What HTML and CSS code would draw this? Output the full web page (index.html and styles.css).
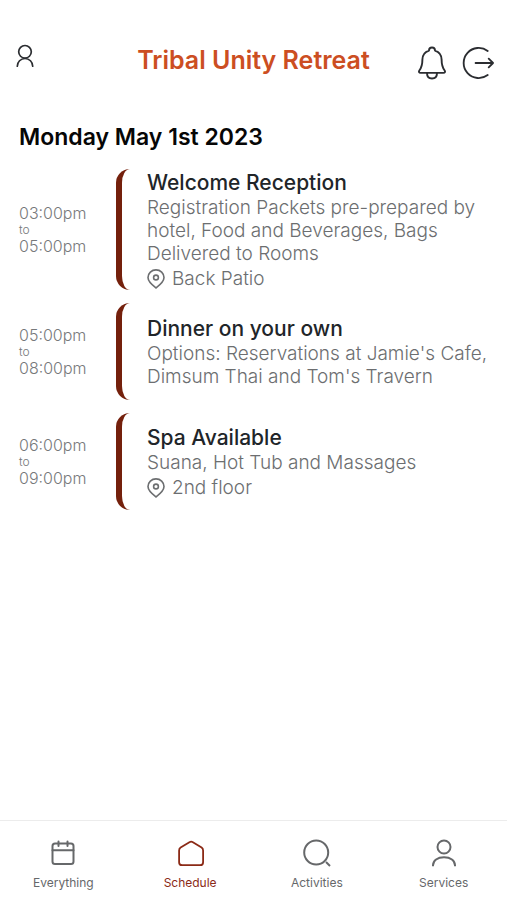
FILE: index.html
```html
<!DOCTYPE html>
<html lang="en">
<head>
<meta charset="utf-8">
<meta name="viewport" content="width=device-width, initial-scale=1">
<title>Tribal Unity Retreat</title>
<link rel="stylesheet" href="styles.css">
</head>
<body>
<header class="topbar">
  <div class="topbar-side topbar-profile">
    <button class="icon-button" type="button" aria-label="Profile">
      <svg class="icon-profile" viewBox="0 0 18 24" fill="none" stroke="currentColor" stroke-width="1.7" stroke-linecap="round"><circle cx="9" cy="7.8" r="6.3"/><path d="M1.3 22.2C1.3 18 4.7 14.5 9 14.5s7.7 3.5 7.7 7.7"/></svg>
    </button>
  </div>
  <h1 class="topbar-title">Tribal Unity Retreat</h1>
  <div class="topbar-side topbar-actions">
    <button class="icon-button" type="button" aria-label="Notifications">
      <svg class="icon-bell" viewBox="0 0 28 34" fill="none" stroke="currentColor" stroke-width="1.9" stroke-linecap="round" stroke-linejoin="round"><path d="M11 4.6C11 2.8 12.3 1.5 14 1.5s3 1.3 3 3.1c4.300 1.400 6.600 4.700 6.600 9 0 5.900 1 8.200 2.900 10.700 1 1.400.5 2.600-1.100 2.600H2.600c-1.600 0-2.100-1.200-1.100-2.600 1.900-2.500 2.900-4.800 2.900-10.700 0-4.300 2.300-7.600 6.600-9z"/><path d="M9 27c0 3.300 2 5.500 5 5.500s5-2.200 5-5.500"/></svg>
    </button>
    <button class="icon-button" type="button" aria-label="Log out">
      <svg class="icon-logout" viewBox="0 0 34 34" fill="none" stroke="currentColor" stroke-width="1.9" stroke-linecap="round" stroke-linejoin="round"><path d="M26.500 4.600a15.500 15.500 0 1 0 0 24.800"/><path d="M14 17h18M27.500 12.500 32 17l-4.500 4.500"/></svg>
    </button>
  </div>
</header>

<main class="schedule">
  <h2 class="day">Monday May 1st 2023</h2>
  <ul class="events">
    <li class="event">
      <div class="time"><time>03:00pm</time><span class="to">to</span><time>05:00pm</time></div>
      <div class="details">
        <h3 class="name">Welcome Reception</h3>
        <p class="description">Registration Packets pre-prepared by hotel, Food and Beverages, Bags Delivered to Rooms</p>
        <p class="place"><svg class="icon-pin" viewBox="0 0 18 20" fill="none" stroke="currentColor" stroke-width="1.6" stroke-linejoin="round"><path d="M9 19C5.500 16.300 1 13 1 8.600a8 7.700 0 0 1 16 0C17 13 12.500 16.300 9 19z"/><circle cx="9" cy="8.500" r="2.400"/></svg>Back Patio</p>
      </div>
    </li>
    <li class="event">
      <div class="time"><time>05:00pm</time><span class="to">to</span><time>08:00pm</time></div>
      <div class="details">
        <h3 class="name">Dinner on your own</h3>
        <p class="description">Options: Reservations at Jamie's Cafe, Dimsum Thai and Tom's Travern</p>
      </div>
    </li>
    <li class="event">
      <div class="time"><time>06:00pm</time><span class="to">to</span><time>09:00pm</time></div>
      <div class="details">
        <h3 class="name">Spa Available</h3>
        <p class="description">Suana, Hot Tub and Massages</p>
        <p class="place"><svg class="icon-pin" viewBox="0 0 18 20" fill="none" stroke="currentColor" stroke-width="1.6" stroke-linejoin="round"><path d="M9 19C5.500 16.300 1 13 1 8.600a8 7.700 0 0 1 16 0C17 13 12.500 16.300 9 19z"/><circle cx="9" cy="8.500" r="2.400"/></svg>2nd floor</p>
      </div>
    </li>
  </ul>
</main>

<nav class="tabs" aria-label="Main">
  <a class="tab" href="#everything">
    <svg class="tab-icon" viewBox="0 0 30 30" fill="none" stroke="currentColor" stroke-width="2" stroke-linecap="round"><rect x="4.500" y="5.500" width="21" height="20.500" rx="2.500"/><path d="M4.500 12.300h21M10.500 3.500v4.500M19.500 3.500v4.500"/></svg>
    Everything
  </a>
  <a class="tab tab-active" href="#schedule" aria-current="page">
    <svg class="tab-icon" viewBox="0 0 30 30" fill="none" stroke="currentColor" stroke-linejoin="round"><path stroke-width="1.800" d="M14.400 4.200 5.600 9.600C4.500 10.300 4.100 11.200 4.100 12.500v11.700c0 1.900 1.100 3 3 3h18c1.900 0 3-1.100 3-3V12.500c0-1.300-.5-2.200-1.500-2.900l-8.700-5.400c-1.200-.7-2.300-.7-3.500 0z"/></svg>
    Schedule
  </a>
  <a class="tab" href="#activities">
    <svg class="tab-icon" viewBox="0 0 30 30" fill="none" stroke="currentColor" stroke-width="2"><circle cx="14.200" cy="14.500" r="12"/><path d="m24 24 4 4"/></svg>
    Activities
  </a>
  <a class="tab" href="#services">
    <svg class="tab-icon" viewBox="0 0 30 30" fill="none" stroke="currentColor" stroke-width="2"><circle cx="15" cy="9" r="6.500"/><path d="M4 28.300v-1C4 22.500 8.500 19.300 15 19.300s11 3.200 11 8v1"/></svg>
    Services
  </a>
</nav>
</body>
</html>
```
FILE: styles.css
```css
* {
  box-sizing: border-box;
}

body {
  margin: 0;
  min-height: 100vh;
  display: flex;
  flex-direction: column;
  background: #fff;
  color: #212529;
  font-family: Inter, "Liberation Sans", sans-serif;
}

h1,
h2,
h3,
p,
ul {
  margin: 0;
  padding: 0;
}

svg {
  display: block;
  flex: none;
}

.topbar {
  display: grid;
  grid-template-columns: 1fr auto 1fr;
  padding: 44px 12px 0;
}

.topbar-side {
  display: flex;
  align-items: flex-start;
}

.topbar-profile {
  padding-left: 4px;
}

.topbar-actions {
  justify-content: flex-end;
  gap: 16px;
  padding-top: 2px;
}

.icon-button {
  padding: 0;
  border: 0;
  background: none;
  color: #2b2d31;
  cursor: pointer;
}

.icon-profile {
  width: 18px;
  height: 24px;
}

.icon-bell {
  width: 28px;
  height: 34px;
}

.icon-logout {
  width: 33px;
  height: 34px;
}

.topbar-title {
  color: #cc4e22;
  font-size: 25px;
  font-weight: 600;
  line-height: 32px;
}

.schedule {
  flex: 1;
  padding: 40px 19px 24px;
}

.day {
  color: #060606;
  font-size: 23px;
  font-weight: 600;
  line-height: 34px;
}

.events {
  display: grid;
  gap: 13px;
  margin-top: 15px;
  list-style: none;
}

.event {
  display: grid;
  grid-template-columns: 97px 1fr;
  min-height: 97px;
}

.time {
  display: flex;
  flex-direction: column;
  justify-content: center;
  color: #77797b;
  font-size: 16px;
  font-weight: 300;
  line-height: 18px;
}

.to {
  font-size: 12px;
  line-height: 15px;
}

.details {
  display: flex;
  flex-direction: column;
  justify-content: center;
  padding-left: 25px;
  border-left: 6px solid #74200c;
  border-radius: 14px;
}

.name {
  font-size: 21px;
  font-weight: 500;
  line-height: 27px;
}

.description,
.place {
  color: #6c6e70;
  font-size: 19px;
  font-weight: 300;
  line-height: 23px;
}

.place {
  display: flex;
  align-items: center;
  gap: 7px;
  padding-top: 2px;
}

.icon-pin {
  width: 18px;
  height: 20px;
}

.tabs {
  display: grid;
  grid-template-columns: repeat(4, 1fr);
  padding: 17px 0 9px;
  border-top: 1px solid #ececec;
}

.tab {
  display: flex;
  flex-direction: column;
  align-items: center;
  gap: 7px;
  color: #66686a;
  font-size: 12px;
  line-height: 16px;
  text-decoration: none;
}

.tab-active {
  color: #8b2a16;
}

.tab-icon {
  width: 30px;
  height: 30px;
}
```
